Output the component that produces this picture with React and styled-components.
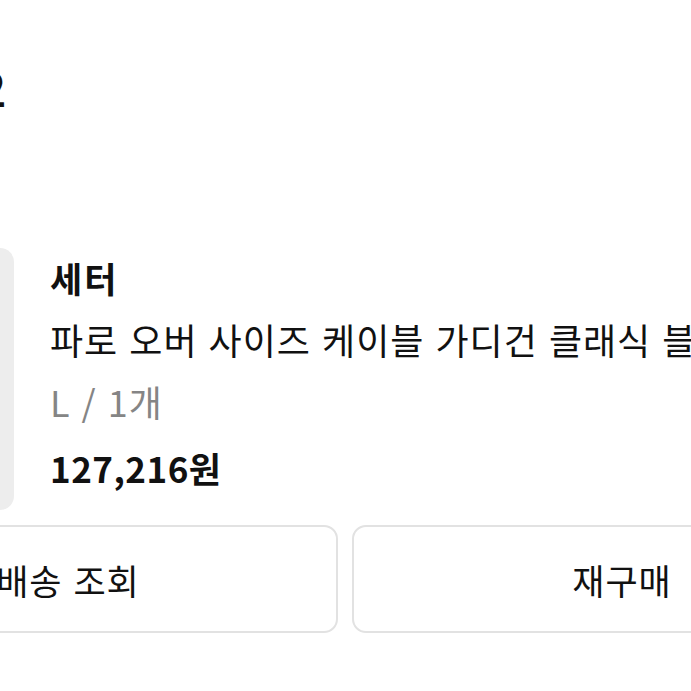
import styled, { createGlobalStyle } from "styled-components";

const GlobalStyle = createGlobalStyle`
    html, body {
        margin: 0;
        padding: 0;
        background: #ffffff;
        overflow: hidden;
    }
    body {
        font-family: "Noto Sans CJK KR", "Noto Sans", sans-serif;
        color: #111111;
    }
`

const Page = styled.div`
    width: 691px;
    height: 691px;
    overflow: hidden;
    padding-top: 57px;
    box-sizing: border-box;
`

const Inner = styled.div`
    margin-left: -202px;
    width: 1094px;
`

const OrderTitle = styled.h2`
    margin: 0 0 133px;
    padding-left: 181px;
    font-size: 48px;
    line-height: 58px;
    font-weight: 500;
`

const ProductRow = styled.div`
    display: flex;
    align-items: flex-start;
    gap: 36px;
    height: 262px;
`

const Thumb = styled.div`
    flex-shrink: 0;
    width: 216px;
    height: 262px;
    border-radius: 14px;
    background-color: #ededed;
`

const Info = styled.div`
    display: flex;
    flex-direction: column;
    padding-top: 0;
    white-space: nowrap;
    overflow: hidden;
`

const Line = styled.p`
    margin: 0;
    font-size: ${({ size }) => size || 36}px;
    line-height: ${({ lh }) => lh || 62}px;
    font-weight: ${({ bold }) => bold ? 700 : 400};
    letter-spacing: ${({ spacing }) => spacing ?? 1}px;
    word-spacing: 2px;
    color: ${({ muted }) => muted ? "#858585" : "#111111"};
`

const Buttons = styled.div`
    display: grid;
    grid-template-columns: 540px 540px;
    gap: 14px;
    margin-top: 15px;
`

const ActionButton = styled.button`
    height: 108px;
    border: 2px solid #e2e2e2;
    border-radius: 14px;
    background: #ffffff;
    font-family: inherit;
    font-size: 35px;
    letter-spacing: 1px;
    word-spacing: 2px;
    color: #111111;
    padding: 0;
    cursor: pointer;
`

const App = () => {
    return (
        <Page>
            <GlobalStyle />
            <Inner>
                <OrderTitle>2</OrderTitle>
                <ProductRow>
                    <Thumb />
                    <Info>
                        <Line bold size={35} lh={60} spacing={2}>세터</Line>
                        <Line>파로 오버 사이즈 케이블 가디건 클래식 블루</Line>
                        <Line muted>L / 1개</Line>
                        <Line bold size={35} lh={72} spacing={0.5}>127,216원</Line>
                    </Info>
                </ProductRow>
                <Buttons>
                    <ActionButton>배송 조회</ActionButton>
                    <ActionButton>재구매</ActionButton>
                </Buttons>
            </Inner>
        </Page>
    )
}

export default App
